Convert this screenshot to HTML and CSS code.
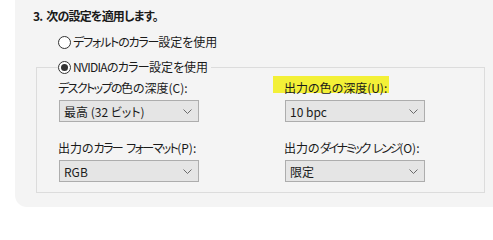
FILE: index.html
```html
<!DOCTYPE html>
<html lang="ja">
<head>
<meta charset="utf-8">
<link rel="stylesheet" href="styles.css">
</head>
<body>
<div class="panel">
  <div class="heading">3. 次の設定を適用します。</div>
  <div class="radio-row"><span class="radio"></span><span><span class="tight-a">デフォルトのカラー</span>設定を使用</span></div>
  <fieldset class="group">
    <legend class="legend"><span class="radio checked"></span><span><span class="tight-b">NVIDIAのカラー</span>設定を使用</span></legend>
    <div class="grid">
      <div class="field">
        <div class="label"><span class="tight-c">デスクトップの</span>色の深度(C):</div>
        <div class="select"><span>最高 (32 ビット)</span><svg class="chev" width="9" height="5" viewBox="0 0 9 5"><path d="M0.5 0.5 L4.5 4.5 L8.5 0.5" fill="none" stroke="#6a6a6a" stroke-width="1"/></svg></div>
      </div>
      <div class="field">
        <div class="label"><span class="mark">出力の色の深度(U):</span></div>
        <div class="select"><span>10 bpc</span><svg class="chev" width="9" height="5" viewBox="0 0 9 5"><path d="M0.5 0.5 L4.5 4.5 L8.5 0.5" fill="none" stroke="#6a6a6a" stroke-width="1"/></svg></div>
      </div>
      <div class="field">
        <div class="label">出力の<span class="tight-d">カラー フォーマット</span>(P):</div>
        <div class="select"><span>RGB</span><svg class="chev" width="9" height="5" viewBox="0 0 9 5"><path d="M0.5 0.5 L4.5 4.5 L8.5 0.5" fill="none" stroke="#6a6a6a" stroke-width="1"/></svg></div>
      </div>
      <div class="field">
        <div class="label">出力の<span class="tight-e">ダイナミック レンジ</span>(O):</div>
        <div class="select"><span>限定</span><svg class="chev" width="9" height="5" viewBox="0 0 9 5"><path d="M0.5 0.5 L4.5 4.5 L8.5 0.5" fill="none" stroke="#6a6a6a" stroke-width="1"/></svg></div>
      </div>
    </div>
  </fieldset>
</div>
</body>
</html>
```

FILE: styles.css
```css
html, body {
  margin: 0;
  padding: 0;
  background: #ffffff;
}
body {
  width: 493px;
  height: 211px;
  overflow: hidden;
  font-family: "Noto Sans CJK JP", "Noto Sans", sans-serif;
  font-size: 12px;
  color: #1a1a1a;
  font-feature-settings: "palt" 1;
}
.panel {
  margin-left: 15px;
  height: 207px;
  background: #f4f4f4;
  border-bottom-left-radius: 12px;
  padding-top: 7px;
  box-sizing: border-box;
}
.heading {
  padding-left: 18px;
  font-weight: bold;
  line-height: 18px;
  letter-spacing: -0.8px;
  word-spacing: 2px;
}
.radio-row {
  display: flex;
  align-items: center;
  gap: 2px;
  margin-top: 9px;
  padding-left: 43px;
  line-height: 16px;
}
.radio {
  width: 11px;
  height: 11px;
  border: 1px solid #333333;
  border-radius: 50%;
  background: #ffffff;
  display: inline-flex;
  align-items: center;
  justify-content: center;
  flex: none;
}
.radio.checked::after {
  content: "";
  width: 7px;
  height: 7px;
  border-radius: 50%;
  background: #333333;
}
.tight-a { letter-spacing: -1.2px; }
.tight-b { letter-spacing: -0.7px; }
.tight-c { letter-spacing: -1.6px; }
.tight-d { letter-spacing: -1.6px; word-spacing: 3px; }
.tight-e { letter-spacing: -2.2px; word-spacing: 3px; }
.group {
  margin: 9px 0 0 21px;
  width: 449px;
  height: 134px;
  box-sizing: border-box;
  border: 1px solid #dcdcdc;
  padding: 5px 0 0 21px;
}
.legend {
  display: flex;
  align-items: center;
  gap: 2px;
  padding: 0 3px 0 0;
  line-height: 16px;
  margin-left: 0;
}
.grid {
  display: grid;
  grid-template-columns: 226px 140px;
  row-gap: 18px;
}
.field {
  display: flex;
  flex-direction: column;
  gap: 4px;
}
.label {
  line-height: 16px;
  height: 16px;
  white-space: nowrap;
}
.mark {
  display: inline-block;
  vertical-align: top;
  height: 17px;
  box-sizing: border-box;
  background: #f3f037;
  padding: 4px 2px 0 11px;
  margin: -4px 0 0 -11px;
}
.select {
  height: 22px;
  box-sizing: border-box;
  width: 140px;
  border: 1px solid #adadad;
  background: #e5e5e5;
  display: flex;
  align-items: center;
  justify-content: space-between;
  padding: 0 6px 0 4px;
  margin-left: 1px;
}
.chev {
  display: block;
}
```
